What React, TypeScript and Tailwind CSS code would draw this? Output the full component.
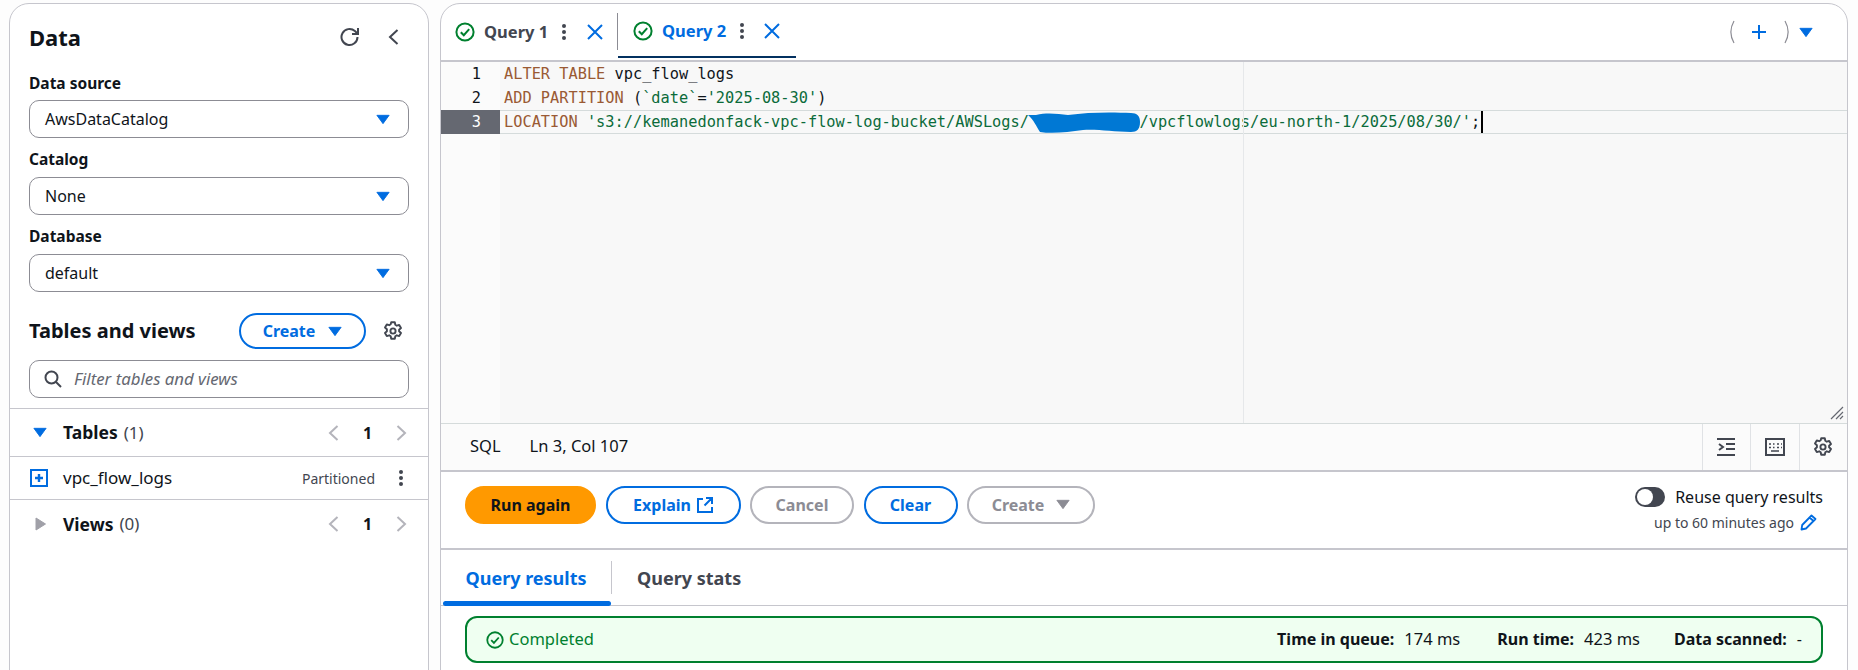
import React from "react";

const ui = "font-['Noto_Sans',sans-serif]";

function Caret({ c = "#006ce0", w = 14 }: { c?: string; w?: number }) {
  return (
    <svg width={w} height={w * 0.75} viewBox="0 0 16 12" className="shrink-0">
      <path d="M1 1.5h14L8 11z" fill={c} stroke={c} strokeWidth="1" strokeLinejoin="round" />
    </svg>
  );
}

function CheckCircle({ size = 20, sw = 2 }: { size?: number; sw?: number }) {
  return (
    <svg width={size} height={size} viewBox="0 0 20 20" fill="none" stroke="#00802f" strokeWidth={sw} className="shrink-0">
      <circle cx="10" cy="10" r="8.6" />
      <path d="M5.8 10.2l3 3 5.4-6" />
    </svg>
  );
}

function Dots({ c = "#424650" }: { c?: string }) {
  return (
    <svg width="6" height="18" viewBox="0 0 6 18" className="shrink-0">
      <circle cx="3" cy="3" r="2" fill={c} />
      <circle cx="3" cy="9" r="2" fill={c} />
      <circle cx="3" cy="15" r="2" fill={c} />
    </svg>
  );
}

function Close() {
  return (
    <svg width="16" height="16" viewBox="0 0 16 16" fill="none" stroke="#006ce0" strokeWidth="2" className="shrink-0">
      <path d="M1 1l14 14M15 1L1 15" />
    </svg>
  );
}

function Gear({ size = 20 }: { size?: number }) {
  return (
    <svg width={size} height={size} viewBox="0 0 20 20" fill="none" stroke="#424650" strokeWidth="1.9" strokeLinejoin="round" className="shrink-0">
      <path d="M8.2 1.3h3.6l.5 2.5 1.5.9 2.4-.8 1.8 3.1-1.9 1.7v1.6l1.9 1.7-1.8 3.1-2.4-.8-1.5.9-.5 2.5H8.2l-.5-2.5-1.5-.9-2.4.8-1.8-3.1 1.9-1.7V8.2L2 6.5l1.8-3.1 2.4.8 1.5-.9z" />
      <circle cx="10" cy="10" r="2.6" />
    </svg>
  );
}

function Chevron({ dir }: { dir: "l" | "r" }) {
  return (
    <svg width="11" height="16" viewBox="0 0 11 16" fill="none" stroke="#b4b4bb" strokeWidth="2" className="shrink-0">
      <path d={dir === "l" ? "M9.5 1L2 8l7.5 7" : "M1.5 1L9 8l-7.5 7"} />
    </svg>
  );
}

function Select({ value }: { value: string }) {
  return (
    <div className="flex h-[38px] items-center justify-between rounded-[10px] border border-[#8c8c94] bg-white pl-[15px] pr-[18px] text-[16px] text-[#0f141a]">
      <span className="pb-[1px]">{value}</span>
      <Caret />
    </div>
  );
}

function Label({ children, cls }: { children: React.ReactNode; cls: string }) {
  return <div className={`h-[22px] text-[15.5px] font-bold leading-[22px] text-[#0f141a] ${cls}`}>{children}</div>;
}

function SectionRow({ title, count, open, cls }: { title: string; count: string; open: boolean; cls: string }) {
  return (
    <div className={`flex items-center pl-[23px] pr-[21px] ${cls}`}>
      <div className="flex w-[30px] items-center">
        {open ? (
          <Caret />
        ) : (
          <svg width="11" height="14" viewBox="0 0 11 14" className="ml-[2px]">
            <path d="M1 1v12l9.5-6z" fill="#a0a0a8" stroke="#a0a0a8" strokeLinejoin="round" />
          </svg>
        )}
      </div>
      <span className="text-[17.5px] font-bold text-[#0f141a]">{title}</span>
      <span className="ml-[6px] text-[17px] text-[#424650]">{count}</span>
      <div className="ml-auto flex items-center">
        <Chevron dir="l" />
        <span className="w-[57px] text-center text-[16px] font-bold text-[#0f141a]">1</span>
        <Chevron dir="r" />
      </div>
    </div>
  );
}

function LeftPanel() {
  return (
    <aside className="ml-[9px] h-[700px] w-[420px] shrink-0 rounded-t-[20px] border border-[#c6c6cd] bg-white">
      <div className="px-[19px] pt-[16px]">
        <div className="flex h-[34px] items-center justify-between">
          <h2 className="text-[22px] font-bold text-[#0f141a]">Data</h2>
          <div className="mr-[10px] flex items-center gap-[28px]">
            <svg width="20" height="20" viewBox="0 0 20 20" fill="none" stroke="#424650" strokeWidth="2">
              <path d="M17.5 10a8 8 0 1 1-2.6-5.9L18 7" />
              <path d="M18 1v6h-6" />
            </svg>
            <svg width="11" height="16" viewBox="0 0 11 16" fill="none" stroke="#424650" strokeWidth="2">
              <path d="M9.5 1L2 8l7.5 7" />
            </svg>
          </div>
        </div>
        <Label cls="mt-[18px]">Data source</Label>
        <div className="mt-[6px]"><Select value="AwsDataCatalog" /></div>
        <Label cls="mt-[10px]">Catalog</Label>
        <div className="mt-[7px]"><Select value="None" /></div>
        <Label cls="mt-[10px]">Database</Label>
        <div className="mt-[7px]"><Select value="default" /></div>
        <div className="mt-[21px] flex h-[36px] items-center">
          <h3 className="text-[20px] font-bold text-[#0f141a]">Tables and views</h3>
          <div className="ml-auto flex h-[36px] w-[127px] items-center justify-center gap-[13px] rounded-[18px] border-2 border-[#006ce0] text-[16px] font-bold text-[#006ce0]">
            <span>Create</span>
            <Caret />
          </div>
          <div className="ml-[17px] mr-[6px]"><Gear /></div>
        </div>
        <div className="mt-[11px] flex h-[38px] items-center rounded-[10px] border border-[#8c8c94] pl-[14px]">
          <svg width="18" height="18" viewBox="0 0 18 18" fill="none" stroke="#424650" strokeWidth="2">
            <circle cx="7.5" cy="7.5" r="6" />
            <path d="M12 12l5 5" />
          </svg>
          <span className="ml-[12px] text-[16.800px] italic text-[#656871]">Filter tables and views</span>
        </div>
      </div>
      <div className="mt-[10px] border-t border-[#c6c6cd]">
        <SectionRow title="Tables" count="(1)" open cls="h-[48px] border-b border-[#c6c6cd]" />
        <div className="flex h-[43px] items-center border-b border-[#c6c6cd] pl-[20px] pr-[24px]">
          <svg width="18" height="18" viewBox="0 0 18 18" className="shrink-0">
            <rect x="1" y="1" width="16" height="16" fill="none" stroke="#006ce0" strokeWidth="2" />
            <path d="M9 5v8M5 9h8" stroke="#006ce0" strokeWidth="2.4" />
          </svg>
          <span className="ml-[15px] text-[17px] text-[#0f141a]">vpc_flow_logs</span>
          <span className="ml-auto text-[14px] text-[#424650]">Partitioned</span>
          <span className="ml-[23px]"><Dots /></span>
        </div>
        <SectionRow title="Views" count="(0)" open={false} cls="h-[48px]" />
      </div>
    </aside>
  );
}

function TabBar() {
  return (
    <div className="flex h-[58px] items-start border-b-2 border-[#c6c6cd]">
      <div className="flex h-[54px] w-[176px] items-center pl-[14px] pt-[2px]">
        <CheckCircle />
        <span className="ml-[9px] text-[16.5px] font-bold text-[#424650]">Query 1</span>
        <span className="ml-[13px]"><Dots /></span>
        <span className="ml-[20px]"><Close /></span>
      </div>
      <div className="mt-[9px] h-[37px] w-px bg-[#8c8c94]" />
      <div className="flex h-[54px] w-[178px] items-center border-b-2 border-[#033160] pl-[15px] pt-[2px]">
        <CheckCircle />
        <span className="ml-[9px] text-[16.5px] font-bold text-[#006ce0]">Query 2</span>
        <span className="ml-[13px]"><Dots /></span>
        <span className="ml-[19px]"><Close /></span>
      </div>
      <div className="ml-auto mr-[34px] flex h-[54px] items-center pt-[2px]">
        <svg width="6" height="24" viewBox="0 0 6 24" fill="none" stroke="#8c8c94" strokeWidth="1.2">
          <path d="M5 1C1 8 1 16 5 23" />
        </svg>
        <svg width="16" height="16" viewBox="0 0 16 16" fill="none" stroke="#006ce0" strokeWidth="2" className="ml-[16px]">
          <path d="M8 1v14M1 8h14" />
        </svg>
        <svg width="6" height="24" viewBox="0 0 6 24" fill="none" stroke="#8c8c94" strokeWidth="1.2" className="ml-[17px]">
          <path d="M1 1c4 7 4 15 0 22" />
        </svg>
        <span className="ml-[9px]"><Caret /></span>
      </div>
    </div>
  );
}

function Editor() {
  const kw = "text-[#9a5a34]";
  const str = "text-[#0b6b3a]";
  return (
    <div className="relative flex h-[361px] bg-[#f8f8f8] font-['DejaVu_Sans_Mono',monospace] text-[15.3px] leading-[24px] text-[#0f141a]">
      <div className="w-[59px] shrink-0 bg-[#fbfbfb] text-right">
        <div className="pr-[19px]">1</div>
        <div className="pr-[19px]">2</div>
        <div className="h-[24px] bg-[#656871] pr-[19px] text-white">3</div>
      </div>
      <div className="min-w-0 flex-1 whitespace-pre">
        <div className="pl-[4px]"><span className={kw}>ALTER TABLE</span> vpc_flow_logs</div>
        <div className="pl-[4px]"><span className={kw}>ADD PARTITION</span> (<span className={str}>`date`</span>=<span className={str}>'2025-08-30'</span>)</div>
        <div className="box-border h-[24px] border-y border-[#d5dbdb] pl-[4px] leading-[22px]">
          <span className={kw}>LOCATION</span>{" "}
          <span className={str}>'s3://kemanedonfack-vpc-flow-log-bucket/AWSLogs/</span>
          <span className="relative inline-block w-[12ch]">
            <svg viewBox="0 0 112 22" className="absolute left-[-2px] top-[-15px] h-[22px] w-[114px]">
              <path d="M0 3L8 3C20 0 30 2 40 3C60 0 85 0 103 1C109 1 112 4 112 10C112 17 109 20 103 20C85 20 70 17 55 18C40 20 25 22 12 20C8 14 6 8 0 3z" fill="#0078d4" />
            </svg>
          </span>
          <span className={str}>/vpcflowlogs/eu-north-1/2025/08/30/'</span>;
          <span className="ml-px inline-block h-[22px] w-[2px] bg-black align-top" />
        </div>
      </div>
      <div className="absolute bottom-0 left-[802px] top-0 w-px bg-[#e6e8ea]" />
      <svg width="14" height="14" viewBox="0 0 14 14" fill="none" stroke="#656871" strokeWidth="1.2" className="absolute bottom-[3px] right-[3px]">
        <path d="M1 13L13 1M6 13l7-7M10 13l3-3" />
      </svg>
    </div>
  );
}

function StatusBar() {
  return (
    <div className="flex h-[49px] items-stretch border-y border-b-2 border-[#d5dbdb] border-b-[#c6c6cd] bg-[#fbfbfb]">
      <div className="flex flex-1 items-center pb-[2px] pl-[29px] text-[16.5px] text-[#0f141a]">
        <span>SQL</span>
        <span className="ml-[29px]">Ln 3, Col 107</span>
      </div>
      {[
        <svg key="a" width="20" height="20" viewBox="0 0 20 20" fill="none" stroke="#424650" strokeWidth="2">
          <path d="M1 2h18M10 7h9M10 12h9M1 18h18M3 7l4 3-4 3" />
        </svg>,
        <svg key="b" width="20" height="20" viewBox="0 0 20 20" fill="none" stroke="#424650" strokeWidth="2">
          <rect x="1" y="2" width="18" height="16" />
          <path d="M4 7h2M8 7h1.500M12 7h2M16 7h1M4 10.500h2M8 10.500h1.500M12 10.500h2M16 10.500h1M6 14h8" strokeWidth="1.700" />
        </svg>,
        <Gear key="c" />,
      ].map((icon, i) => (
        <div key={i} className="flex w-[48.500px] items-center justify-center border-l border-[#e0e2e5]">
          {icon}
        </div>
      ))}
    </div>
  );
}

function Btn({ children, cls }: { children: React.ReactNode; cls: string }) {
  return (
    <div className={`flex h-[38px] items-center justify-center rounded-[19px] border-2 pb-[1px] text-[16px] font-bold ${cls}`}>
      {children}
    </div>
  );
}

function RunBar() {
  return (
    <div className="flex h-[78px] items-start border-b-2 border-[#c6c6cd] pl-[24px] pr-[24px] pt-[14px]">
      <div className="flex gap-[9.500px]">
        <Btn cls="w-[131px] border-[#ff9900] bg-[#ff9900] text-[#0f141a]">Run again</Btn>
        <Btn cls="w-[135px] gap-[6px] border-[#006ce0] text-[#006ce0]">
          <span>Explain</span>
          <svg width="16" height="16" viewBox="0 0 16 16" fill="none" stroke="#006ce0" strokeWidth="2">
            <path d="M6 2H1v13h14v-5M9 1h6v6M15 1L7.500 8.500" />
          </svg>
        </Btn>
        <Btn cls="w-[104px] border-[#b4b4bb] text-[#8c8c94]">Cancel</Btn>
        <Btn cls="w-[94px] border-[#006ce0] text-[#006ce0]">Clear</Btn>
        <Btn cls="w-[128px] gap-[12px] border-[#b4b4bb] text-[#8c8c94]">
          <span>Create</span>
          <Caret c="#8c8c94" />
        </Btn>
      </div>
      <div className="ml-auto flex flex-col items-end">
        <div className="flex h-[22px] items-center gap-[10px]">
          <div className="flex h-[20px] w-[30px] items-center rounded-full bg-[#424650] pl-[2px]">
            <div className="h-[16px] w-[16px] rounded-full bg-white" />
          </div>
          <span className="text-[16px] text-[#0f141a]">Reuse query results</span>
        </div>
        <div className="mr-[6px] mt-[3px] flex h-[22px] items-center gap-[6px]">
          <span className="text-[14px] text-[#424650]">up to 60 minutes ago</span>
          <svg width="17" height="17" viewBox="0 0 17 17" fill="none" stroke="#006ce0" strokeWidth="1.800" strokeLinejoin="round">
            <path d="M1.500 15.500l.7-4.500L11.500 1.500l4 3.500-9.500 9.500zM9.500 3.500l4 3.500" />
          </svg>
        </div>
      </div>
    </div>
  );
}

function ResultTabs() {
  return (
    <div className="flex h-[56px] items-stretch border-b border-[#c6c6cd]">
      <div className="relative flex w-[170px] items-center justify-center pt-[1px] text-[18px] font-bold text-[#006ce0]">
        Query results
        <div className="absolute bottom-[-1px] left-[2px] right-0 h-[5px] rounded-[3px] bg-[#006ce0]" />
      </div>
      <div className="my-[11px] w-px bg-[#c6c6cd]" />
      <div className="flex items-center pl-[25px] pt-[1px] text-[18px] font-bold text-[#424650]">Query stats</div>
    </div>
  );
}

function Alert() {
  return (
    <div className="mx-[24px] mt-[10px] flex h-[47px] items-center rounded-[12px] border-2 border-[#00802f] bg-[#effff1] pl-[19px] pr-[19px]">
      <CheckCircle size={18} sw={2} />
      <span className="ml-[5px] pb-[1px] text-[16.5px] text-[#00802f]">Completed</span>
      <div className="ml-auto flex items-center pb-[1px] text-[16px] text-[#0f141a]">
        <b>Time in queue:</b>
        <span className="ml-[10px] text-[16.5px]">174 ms</span>
        <b className="ml-[37px]">Run time:</b>
        <span className="ml-[10px] text-[16.5px]">423 ms</span>
        <b className="ml-[34px]">Data scanned:</b>
        <span className="ml-[10px]">-</span>
      </div>
    </div>
  );
}

export default function App() {
  return (
    <div className={`flex h-[670px] gap-[11px] overflow-hidden bg-[#fdfdfd] pt-[3px] ${ui}`}>
      <LeftPanel />
      <main className="h-[700px] w-[1408px] shrink-0 overflow-hidden rounded-t-[20px] border border-[#c6c6cd] bg-white">
        <TabBar />
        <Editor />
        <StatusBar />
        <RunBar />
        <ResultTabs />
        <Alert />
      </main>
    </div>
  );
}
